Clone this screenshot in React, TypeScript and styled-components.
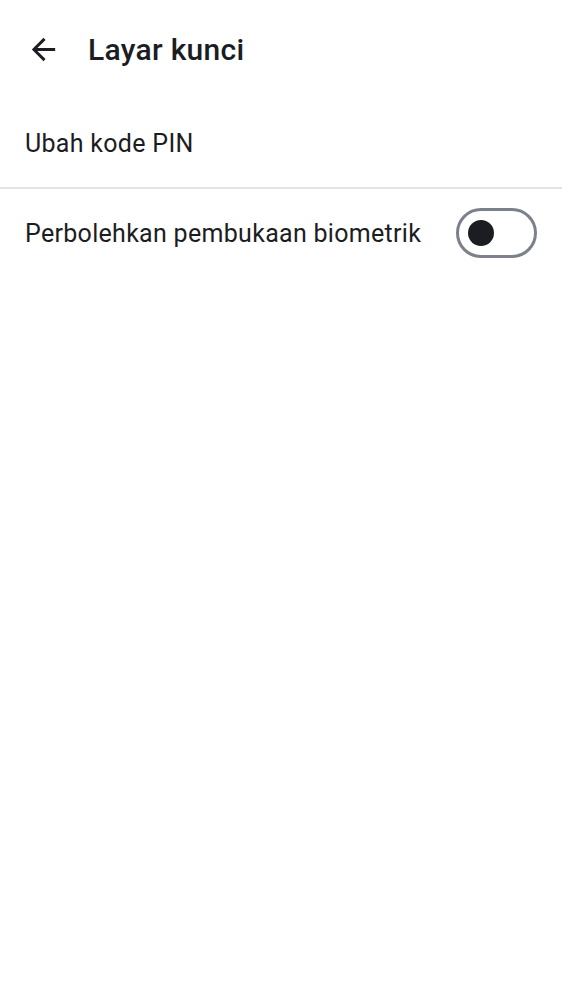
import React, { useState } from 'react';
import styled, { createGlobalStyle } from 'styled-components';

// **** Style Section **** //

const GlobalStyle = createGlobalStyle`
  html, body {
    margin: 0;
    padding: 0;
    background: #ffffff;
  }
  body {
    font-family: Roboto, "Noto Sans", "Liberation Sans", sans-serif;
    color: #1c1d22;
  }
`;

const Screen = styled.div`
  width: 562px;
  min-height: 1000px;
  background: #ffffff;
  display: flex;
  flex-direction: column;
`;

const TopBar = styled.header`
  height: 99px;
  display: flex;
  align-items: center;
  padding-left: 26px;
  box-sizing: border-box;
`;

const BackButton = styled.button`
  width: 35px;
  height: 35px;
  padding: 0;
  border: none;
  background: transparent;
  display: flex;
  align-items: center;
  justify-content: center;
  color: #1c1d22;
  cursor: pointer;
`;

const Title = styled.h1`
  margin: 0 0 0 27px;
  font-size: 30px;
  font-weight: 500;
  letter-spacing: 0.3px;
  color: #1c1d22;
`;

type RowProps = {
  height: number;
};
const Row = styled.div<RowProps>`
  height: ${p => p.height}px;
  display: flex;
  align-items: center;
  justify-content: space-between;
  padding: 0 25px;
  box-sizing: border-box;
`;

const RowLabel = styled.span`
  font-size: 25px;
  font-weight: 400;
  letter-spacing: 0.3px;
  color: #1c1d22;
`;

const Divider = styled.hr`
  margin: 0;
  border: none;
  height: 2px;
  background: #e2e4e8;
`;

type SwitchProps = {
  on: boolean;
};
const SwitchTrack = styled.button<SwitchProps>`
  width: 81px;
  height: 50px;
  border-radius: 25px;
  border: 3px solid ${p => (p.on ? '#1c1d22' : '#7b808a')};
  background: ${p => (p.on ? '#1c1d22' : '#ffffff')};
  box-sizing: border-box;
  padding: 0;
  flex-shrink: 0;
  display: flex;
  align-items: center;
  justify-content: ${p => (p.on ? 'flex-end' : 'flex-start')};
  cursor: pointer;
`;

const SwitchKnob = styled.span<SwitchProps>`
  width: 26px;
  height: 26px;
  border-radius: 50%;
  margin: 0 9px;
  background: ${p => (p.on ? '#ffffff' : '#1c1d22')};
`;

// **** Component Function **** //

const ArrowBack = () => (
  <svg width="35" height="35" viewBox="0 0 24 24" fill="currentColor">
    <path d="M20 11H7.83l5.59-5.59L12 4l-8 8 8 8 1.41-1.41L7.83 13H20v-2z" />
  </svg>
);

const App = () => {
  const [biometric, setBiometric] = useState(false);

  return (
    <Screen>
      <GlobalStyle />
      <TopBar>
        <BackButton type="button" aria-label="Kembali">
          <ArrowBack />
        </BackButton>
        <Title>Layar kunci</Title>
      </TopBar>
      <Row height={88}>
        <RowLabel>Ubah kode PIN</RowLabel>
      </Row>
      <Divider />
      <Row height={88}>
        <RowLabel>Perbolehkan pembukaan biometrik</RowLabel>
        <SwitchTrack
          type="button"
          on={biometric}
          onClick={() => setBiometric(!biometric)}
        >
          <SwitchKnob on={biometric} />
        </SwitchTrack>
      </Row>
    </Screen>
  );
};

export default App;
